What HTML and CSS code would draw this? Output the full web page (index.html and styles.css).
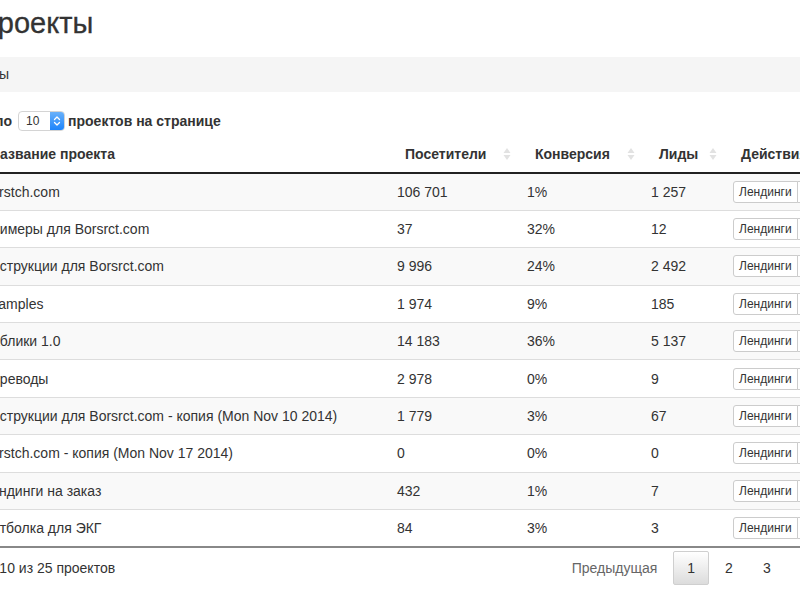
FILE: index.html
```html
<!DOCTYPE html>
<html lang="ru">
<head>
<meta charset="utf-8">
<title>Проекты</title>
<link rel="stylesheet" href="styles.css">
</head>
<body>
<div class="page">
  <h2 class="title">Проекты</h2>
  <div class="crumbs"><span class="crumb-active">Проекты</span></div>

  <div class="length">
    <span class="length-pre">Показывать по</span>
    <span class="select"><span class="select-val">10</span><span class="select-btn"><svg width="8" height="12" viewBox="0 0 8 12"><path d="M1.5 4.5 L4 2 L6.5 4.5 M1.5 7.5 L4 10 L6.5 7.5" fill="none" stroke="#fff" stroke-width="1.3" stroke-linecap="round" stroke-linejoin="round"/></svg></span></span>
    <span>проектов на странице</span>
  </div>

  <table class="grid">
    <colgroup>
      <col class="c-name"><col class="c-vis"><col class="c-conv"><col class="c-leads"><col class="c-act">
    </colgroup>
    <thead>
      <tr>
        <th><div class="th-in">Название проекта</div></th>
        <th><div class="th-in">Посетители<svg class="sort" width="8" height="14" viewBox="0 0 8 14"><path d="M4 1 L7.5 6 H0.5 Z M4 13 L7.5 8 H0.5 Z" fill="#e2e2e2"/></svg></div></th>
        <th><div class="th-in">Конверсия<svg class="sort" width="8" height="14" viewBox="0 0 8 14"><path d="M4 1 L7.5 6 H0.5 Z M4 13 L7.5 8 H0.5 Z" fill="#e2e2e2"/></svg></div></th>
        <th><div class="th-in">Лиды<svg class="sort" width="8" height="14" viewBox="0 0 8 14"><path d="M4 1 L7.5 6 H0.5 Z M4 13 L7.5 8 H0.5 Z" fill="#e2e2e2"/></svg></div></th>
        <th><div class="th-in">Действия</div></th>
      </tr>
    </thead>
    <tbody>
      <tr><td>Borstch.com</td><td>106 701</td><td>1%</td><td>1 257</td><td><span class="btns"><span class="btn">Лендинги</span><span class="btn">Статистика</span></span></td></tr>
      <tr><td>Примеры для Borsrct.com</td><td>37</td><td>32%</td><td>12</td><td><span class="btns"><span class="btn">Лендинги</span><span class="btn">Статистика</span></span></td></tr>
      <tr><td>Инструкции для Borsrct.com</td><td>9 996</td><td>24%</td><td>2 492</td><td><span class="btns"><span class="btn">Лендинги</span><span class="btn">Статистика</span></span></td></tr>
      <tr><td>Examples</td><td>1 974</td><td>9%</td><td>185</td><td><span class="btns"><span class="btn">Лендинги</span><span class="btn">Статистика</span></span></td></tr>
      <tr><td>Паблики 1.0</td><td>14 183</td><td>36%</td><td>5 137</td><td><span class="btns"><span class="btn">Лендинги</span><span class="btn">Статистика</span></span></td></tr>
      <tr><td>Переводы</td><td>2 978</td><td>0%</td><td>9</td><td><span class="btns"><span class="btn">Лендинги</span><span class="btn">Статистика</span></span></td></tr>
      <tr><td>Инструкции для Borsrct.com - копия (Mon Nov 10 2014)</td><td>1 779</td><td>3%</td><td>67</td><td><span class="btns"><span class="btn">Лендинги</span><span class="btn">Статистика</span></span></td></tr>
      <tr><td>Borstch.com - копия (Mon Nov 17 2014)</td><td>0</td><td>0%</td><td>0</td><td><span class="btns"><span class="btn">Лендинги</span><span class="btn">Статистика</span></span></td></tr>
      <tr><td>Лендинги на заказ</td><td>432</td><td>1%</td><td>7</td><td><span class="btns"><span class="btn">Лендинги</span><span class="btn">Статистика</span></span></td></tr>
      <tr><td>Футболка для ЭКГ</td><td>84</td><td>3%</td><td>3</td><td><span class="btns"><span class="btn">Лендинги</span><span class="btn">Статистика</span></span></td></tr>
    </tbody>
  </table>

  <div class="footer">
    <div class="info"><span class="info-pre">Показано с 1 по </span>10 из 25 проектов</div>
    <div class="pager">
      <span class="pg pg-disabled">Предыдущая</span>
      <span class="pg pg-current">1</span>
      <span class="pg">2</span>
      <span class="pg">3</span>
      <span class="pg">Следующая</span>
    </div>
  </div>
</div>
</body>
</html>
```
FILE: styles.css
```css
html, body {
  margin: 0;
  padding: 0;
  background: #fff;
  overflow: hidden;
}
body {
  width: 800px;
  height: 600px;
  font-family: "Liberation Sans", Arial, sans-serif;
  font-size: 14px;
  line-height: 20px;
  color: #333;
}
.page {
  margin-left: -26px;
  width: 960px;
}
.title {
  margin: 7px 0 0 3px;
  font-size: 29px;
  line-height: 33px;
  font-weight: normal;
  color: #333;
  -webkit-text-stroke: 0.3px #333;
}
.crumbs {
  margin-top: 17px;
  margin-left: -36px;
  height: 35px;
  box-sizing: border-box;
  padding: 8px 15px;
  line-height: 19px;
  background: #f5f5f5;
  border-radius: 4px;
}
.crumb-active {
  color: #333;
}
.length {
  margin-top: 18px;
  height: 22px;
  display: flex;
  align-items: center;
  gap: 6px;
  font-weight: bold;
  margin-left: -67px;
}
.select {
  display: flex;
  align-items: stretch;
  width: 47px;
  height: 20px;
  box-sizing: border-box;
  border: 1px solid #d4d4d4;
  border-radius: 4px;
  background: #fff;
  overflow: hidden;
  font-weight: normal;
  font-size: 12px;
  margin-right: -3px;
}
.select-val {
  flex: 1;
  padding-left: 7px;
  line-height: 18px;
}
.select-btn {
  width: 14px;
  display: flex;
  align-items: center;
  justify-content: center;
  background: linear-gradient(#69b1fa, #1d84fb);
}
.grid {
  margin-top: 4px;
  width: 960px;
  table-layout: fixed;
  border-collapse: collapse;
  border-spacing: 0;
}
.c-name { width: 415px; }
.c-vis { width: 130px; }
.c-conv { width: 124px; }
.c-leads { width: 82px; }
.c-act { width: 209px; }
.grid th {
  text-align: left;
  font-weight: bold;
  padding: 8px 8px 8px 16px;
  border-bottom: 2px solid #222;
  line-height: 20px;
}
.th-in {
  display: flex;
  align-items: center;
  justify-content: space-between;
  white-space: nowrap;
}
.sort {
  flex: none;
}
.grid td {
  height: 37.4px;
  box-sizing: border-box;
  padding: 0 8px;
  border-top: 1px solid #ddd;
  vertical-align: middle;
  white-space: nowrap;
  line-height: 20px;
}
.grid tbody tr:nth-child(odd) td {
  background: #f9f9f9;
}
.grid tbody tr:first-child td {
  border-top: none;
}
.grid tbody tr:last-child td {
  border-bottom: 2px solid #888;
}
.btns {
  display: inline-flex;
}
.btn {
  display: inline-block;
  font-size: 12px;
  line-height: 18px;
  padding: 1px 5px;
  border: 1px solid #ccc;
  background: #fff;
  color: #333;
  border-radius: 3px;
}
.btn + .btn {
  margin-left: -1px;
  border-top-left-radius: 0;
  border-bottom-left-radius: 0;
}
.btns .btn:first-child {
  border-top-right-radius: 0;
  border-bottom-right-radius: 0;
}
.footer {
  margin-top: 3px;
  height: 34px;
  display: flex;
  align-items: center;
  justify-content: space-between;
}
.info {
  margin-left: -82px;
}
.pager {
  display: flex;
  align-items: center;
  margin-right: 41px;
}
.pg {
  display: inline-block;
  padding: 7px 13px;
  line-height: 18px;
  margin-left: 2px;
  border: 1px solid transparent;
  border-radius: 2px;
  color: #333;
}
.pg-disabled {
  color: #666;
}
.pg-current {
  border-color: #cfcfcf;
  background: linear-gradient(#fff, #dcdcdc);
}
```
